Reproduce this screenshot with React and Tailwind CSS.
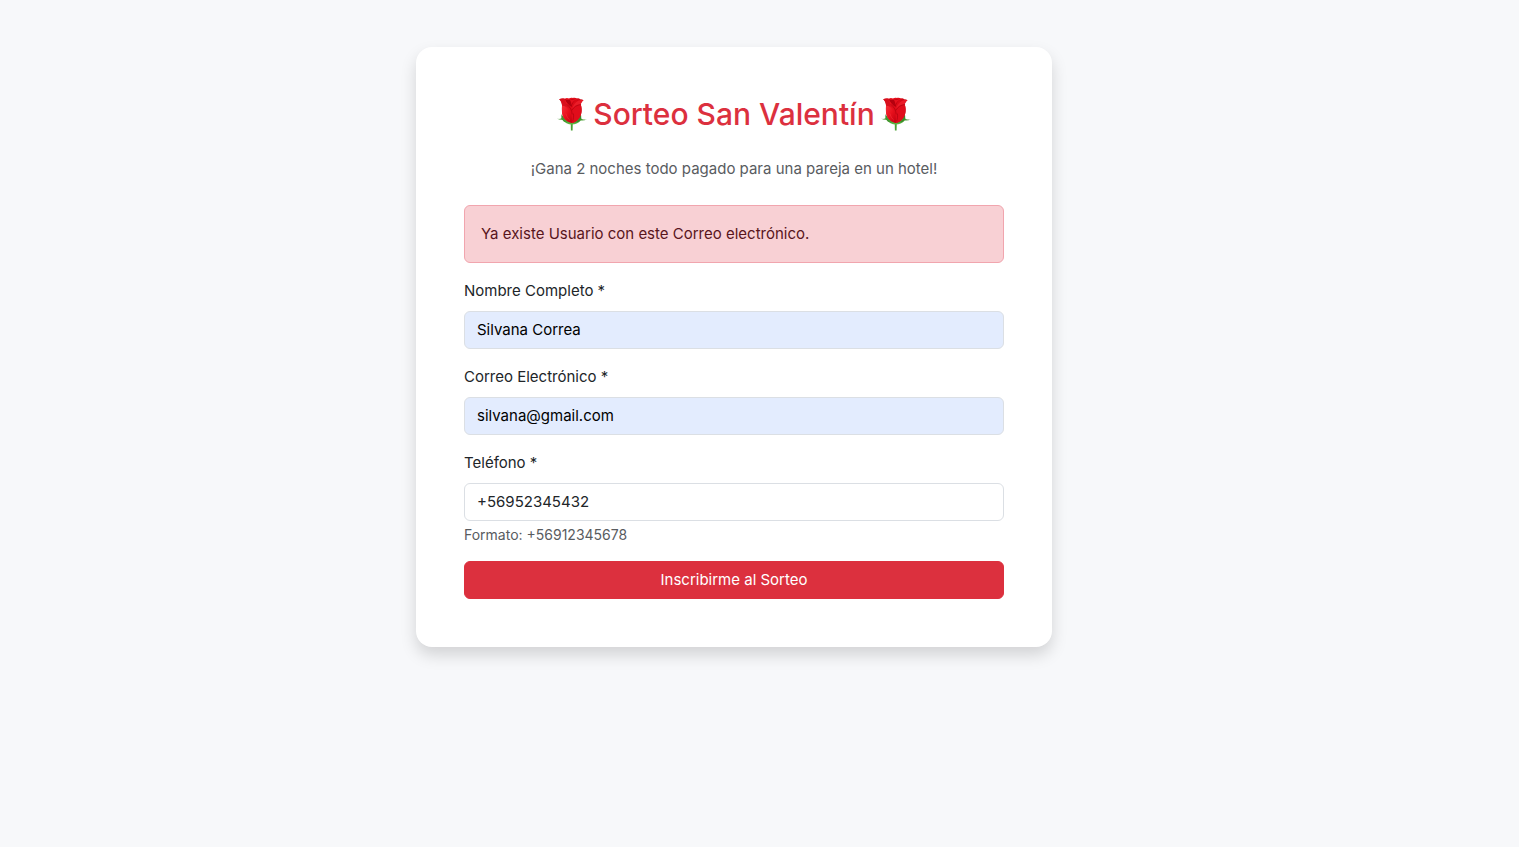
import { useId } from "react";

function Rose() {
  const id = useId();
  const petal = `${id}-petal`;
  const fold = `${id}-fold`;
  const leaf = `${id}-leaf`;
  return (
    <svg viewBox="0 0 30 34" className="h-[34px] w-[30px] shrink-0" aria-hidden="true">
      <defs>
        <linearGradient id={petal} x1="0" x2="1" y1="0" y2="0.3">
          <stop offset="0" stopColor="#c50412" />
          <stop offset="0.3" stopColor="#ee1420" />
          <stop offset="0.65" stopColor="#dc0a17" />
          <stop offset="1" stopColor="#b8000e" />
        </linearGradient>
        <linearGradient id={fold} x1="0" x2="1" y1="0" y2="1">
          <stop offset="0" stopColor="#f6303a" />
          <stop offset="0.5" stopColor="#e8101c" />
          <stop offset="1" stopColor="#c0000f" />
        </linearGradient>
        <linearGradient id={leaf} x1="0" x2="0" y1="0" y2="1">
          <stop offset="0" stopColor="#2c7a22" />
          <stop offset="1" stopColor="#5fb944" />
        </linearGradient>
      </defs>
      <path d="M13.700 25h2.100l-.2 8.400h-1.700z" fill="#4ba234" />
      <path d="M.3 21.800c1.700.3 3.200.1 4.300-.6L4.500 17.200c2 3.200 5.100 6.800 10.300 8.600 4.500-1.600 7.700-4.800 9.200-8.300l.1 4c1.500 1 3.200 1.300 5.600 1.100-1.800.8-3.900 1.100-5.900.8-2.300 2.700-5.600 4.100-9 4.100-3.800 0-7.100-1.700-9.400-4.700-2 .1-3.700-.2-5.100-1z" fill={`url(#${leaf})`} />
      <path d="M2.200 2.200C4 1.300 6 1.300 7.800 1.800 9 .8 10.700.8 12 1.600c1.200-.8 2.600-1 3.800-.5C17 .6 18.700.7 20 1.400c1.200-.3 2.500-.1 3.100.8 1.200-.1 2.500.2 3.400 1-1.300.9-2.400 2.400-2.800 4.300.9 2.300 1.100 5 .8 7.500-.6 5-3.700 9.600-9.700 11.100C8.700 24.500 5.400 20.300 5 15.300c-.2-2.500-.2-4.700 0-6.800C4.800 5.900 4 3.700 2.200 2.200z" fill={`url(#${petal})`} />
      <path d="M5.200 8.500c2.100.2 4.300 1.600 5.900 3.700 2.200 3 3.900 7.800 3.700 13.900C8.700 24.500 5.400 20.300 5 15.300c-.1-2.500 0-4.800.2-6.800z" fill={`url(#${fold})`} />
      <path d="M23.700 7.500c-3.500.6-6.200 2.600-7.900 5.200-.9 1.500-1.200 2.900-1.100 4.300.4 2.600.4 5.500.1 9.100 6-1.500 9.100-6.100 9.700-11.100.3-2.500.1-5.200-.8-7.500z" fill="#e00d1b" />
      <path d="M2.200 2.200C4 1.300 6 1.300 7.800 1.800c-.2 2.100.7 4.200 2.500 5.800l3.900 4.800c-2.900-2.100-5.800-3.400-9-3.900C4.900 6 4 3.900 2.200 2.200z" fill="#d80f1c" />
      <path d="M26.500 3.200c-3-.7-5.300.1-7.200 1.900-2.200 2-3.700 4.500-4.200 7.600 2-3.300 5-5 8.600-5.200.4-1.900 1.500-3.400 2.800-4.300z" fill="#ea1c28" />
      <path d="M8 2c1.700.9 3.400 1 5 .6 2.100-.6 4-.6 6 .1-2.100 1.400-3.700 3.600-4.300 7.300C11.600 8.200 9 5.400 8 2z" fill="#b5000e" />
      <path d="M12 1.600c1.500 1.200 3.100 1.500 5 .8 1-.4 2-.7 3-1-.7 1-1.500 1.700-2.500 2.300-1.400.8-2.300 2.100-2.800 4.300-.5-2.200-1.200-4.500-2.700-6.400z" fill="#e5101d" />
      <path d="M10.300 7.600c3 2.600 4.700 6 4.900 9.500M15 13c1.500-3 4.600-5.100 8.700-5.500M16.500 17c.2 2.700 0 5-.7 7" fill="none" stroke="#a8000c" strokeWidth=".6" strokeLinecap="round" />
      <path d="M9 17c.7 2.600 2 4.700 3.600 6" fill="none" stroke="#ff3d46" strokeWidth=".7" strokeLinecap="round" opacity=".6" />
      <path d="M4.700 17.600c.2 3.200 2.800 6.400 6.400 8.100l-4.300-1.300-2.200-2.700z" fill="#43952f" />
      <path d="M24.100 18.300c-.7 3.200-3.100 5.900-6.200 7.400l4.100-1.300 2.200-2.700z" fill="#398829" />
    </svg>
  );
}

function Field({ id, label, hint, className, ...props }) {
  return (
    <div className="mb-4">
      <label htmlFor={id} className="mb-2 block">
        {label}
      </label>
      <input
        id={id}
        aria-describedby={hint ? `${id}-hint` : undefined}
        className={`block w-full rounded-md border border-[#dbdfe4] px-3 py-1.5 leading-6 outline-none ${className}`}
        {...props}
      />
      {hint && (
        <div id={`${id}-hint`} className="mt-1 text-sm leading-5 text-[#595c5f]">
          {hint}
        </div>
      )}
    </div>
  );
}

export default function App() {
  return (
    <div className="min-h-screen bg-[#f7f8fa] pt-[47px] pr-[51px] pb-12 font-[Inter,'Liberation_Sans',sans-serif] text-[15px] leading-6 text-[#212529]">
      <main className="mx-auto w-full max-w-[636px] rounded-2xl bg-white p-12 shadow-[0_8px_16px_rgba(0,0,0,0.15)]">
        <h1 className="mb-6 flex items-center justify-center gap-1.5 text-[30px] leading-[38px] font-medium text-[#dc303e]">
          <Rose />
          Sorteo San Valentín
          <Rose />
        </h1>
        <p className="mb-6 text-center text-[#595c5f]">
          ¡Gana 2 noches todo pagado para una pareja en un hotel!
        </p>
        <div role="alert" className="mb-4 rounded-md border border-[#f1a5ae] bg-[#f8d0d4] p-4 text-[#58151c]">
          Ya existe Usuario con este Correo electrónico.
        </div>
        <form onSubmit={(e) => e.preventDefault()}>
          <Field id="nombre" label="Nombre Completo *" type="text" defaultValue="Silvana Correa" className="bg-[#e3ecfe] text-black" />
          <Field id="correo" label="Correo Electrónico *" type="email" defaultValue="silvana@gmail.com" className="bg-[#e3ecfe] text-black" />
          <Field id="telefono" label="Teléfono *" type="tel" defaultValue="+56952345432" hint="Formato: +56912345678" className="bg-white" />
          <button type="submit" className="block w-full rounded-md border border-[#dc303e] bg-[#dc303e] px-3 py-1.5 text-white">
            Inscribirme al Sorteo
          </button>
        </form>
      </main>
    </div>
  );
}
